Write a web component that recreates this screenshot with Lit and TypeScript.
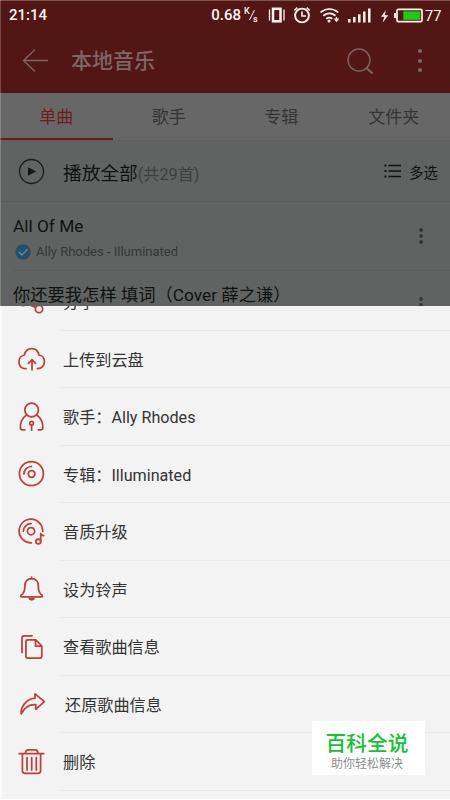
import { LitElement, html, css, svg } from "lit";
import { customElement } from "lit/decorators.js";

const dots = (cls: string) => html`<div class="dots ${cls}"><i></i><i></i><i></i></div>`;

const icons = {
  share: svg`<circle cx="8" cy="16" r="3.6"/><circle cx="24" cy="8" r="3.6"/><circle cx="24" cy="23" r="3.7"/><path d="M11.2 14.3L20.7 9.6M11.2 17.6L20.7 21.4"/>`,
  cloud: svg`<path d="M11 25.6C6.5 26 3.9 22.6 3.9 19c0-3.6 2.3-6.5 5.5-7C10.200 8 13 5.600 16.700 5.600s6.500 2.400 7.200 6.400c3.300.3 5.500 3.200 5.500 6.700 0 4-2.700 7-7 6.900M17 26.800V17M13.400 20.300L17 16.700l3.600 3.600"/>`,
  person: svg`<circle cx="16.600" cy="9" r="6.800"/><path d="M11.600 14C6.500 17 5 23 5.400 27c.1 1.300.8 1.900 2.100 1.900h2.300M21.600 14c5.100 3 6.600 9 6.200 13-.1 1.300-.8 1.900-2.100 1.900h-2.300M16.600 24v5.200"/><circle cx="16.600" cy="22.200" r="1.800"/>`,
  disc: svg`<circle cx="16.400" cy="15.700" r="12"/><circle cx="16.600" cy="16" r="3.300"/><path d="M8.900 16a7.600 7.600 0 0 1 7.500-7.500"/>`,
  quality: svg`<path d="M16.500 26.800A11.800 11.800 0 1 1 27.700 15.400"/><circle cx="16" cy="15.200" r="3.600"/><path d="M8.400 15.200A7.600 7.600 0 0 1 16 7.700"/><circle cx="23.300" cy="25.500" r="2.400"/><path d="M25.700 25.500V17.500c.3 1.500 1.300 2 3 2.200"/>`,
  bell: svg`<path d="M16.600 4v1.800M16.600 5.500c-4.200 0-6.700 3.200-6.700 7.200 0 5.500-.7 7.700-3.500 9.200-.9.500-.8 1.900.4 1.900h19.600c1.200 0 1.300-1.400.4-1.900-2.800-1.500-3.500-3.700-3.500-9.200 0-4-2.500-7.200-6.700-7.200z"/><path d="M14.300 25.700h4.800c-.3 1.500-4.500 1.500-4.800 0z"/>`,
  files: svg`<path d="M7 21.500V7.200C7 5.600 7.800 4.800 9.400 4.800H17"/><path d="M12.800 8.800h8l6 6.200v10c0 1.400-.7 2.200-2.100 2.200H13c-1.400 0-2.100-.8-2.100-2.200V11c0-1.400.6-2.200 1.900-2.200zM20.500 9v6.200h6.200"/>`,
  forward: svg`<path d="M20 5.900l9.400 7.800-8.700 7.600v-4.700c-7-.6-11.500 3.400-14.500 9.200-.6-7.500 5.300-14.600 13.800-15.600z"/>`,
  trash: svg`<path d="M4.200 7.700h24.500M10.300 7.500c.2-2.600 1-3.600 3-3.600h6.700c2 0 2.800 1 3 3.600M7.400 8v16.800c0 1.700.9 2.600 2.600 2.600h13c1.700 0 2.600-.9 2.600-2.600V8M12 11.500V24M16.700 11.500V24M21.300 11.500V24"/>`,
};

const menu: { icon: keyof typeof icons; label: string; shifted?: boolean }[] = [
  { icon: "share", label: "分享" },
  { icon: "cloud", label: "上传到云盘" },
  { icon: "person", label: "歌手：Ally Rhodes" },
  { icon: "disc", label: "专辑：Illuminated" },
  { icon: "quality", label: "音质升级" },
  { icon: "bell", label: "设为铃声" },
  { icon: "files", label: "查看歌曲信息" },
  { icon: "forward", label: "还原歌曲信息", shifted: true },
  { icon: "trash", label: "删除" },
];

@customElement("app-root")
export class AppRoot extends LitElement {
  static styles = css`
    :host {
      display: block;
      position: relative;
      width: 450px;
      height: 800px;
      overflow: hidden;
      background: #616362;
      font-family: Roboto, "Noto Sans CJK SC", sans-serif;
      color: #101211;
    }
    * { box-sizing: border-box; }
    svg { display: block; flex: none; fill: none; }
    .top { height: 93px; background: #521714; border-top: 1px solid #805350; }
    .status {
      height: 27px;
      display: flex;
      align-items: center;
      padding: 0 1px 0 9px;
      color: #fff3f1;
      font-size: 15px;
      font-weight: 500;
    }
    .status .speed { margin-left: auto; }
    .bar { height: 65px; display: flex; align-items: center; padding: 0 28px 0 22px; }
    .title { margin-left: 22px; font-size: 21px; line-height: 30px; font-weight: 500; color: #7b6765; flex: 1; }
    .dots { display: flex; flex-direction: column; align-items: center; }
    .dots i { width: 4px; height: 4px; border-radius: 50%; background: #363837; }
    .big { gap: 5.500px; margin-left: 44px; }
    .big i { background: #7d6765; }
    .small { gap: 2.300px; width: 4px; margin-right: 27px; }
    .tabs { display: grid; grid-template-columns: repeat(4, 1fr); height: 48px; background: #676767; border-bottom: 1px solid #5f6160; }
    .tab { height: 47px; display: flex; align-items: center; justify-content: center; font-size: 17px; color: #343434; border-bottom: 2px solid transparent; }
    .active { color: #6f1d1b; border-color: #721a1b; }
    .play { height: 61px; display: flex; align-items: center; padding: 0 12px 0 18px; border-bottom: 1px solid #595b5a; }
    .all { margin-left: 18px; font-size: 18.700px; flex: 1; }
    .count { font-size: 16.200px; color: #3d3f3e; }
    .multi { margin-left: 8px; font-size: 14.500px; }
    .song { height: 69px; display: flex; align-items: center; margin-left: 13px; border-bottom: 1px solid #5b5d5c; }
    .info { flex: 1; height: 69px; padding-top: 11px; }
    .name { font-size: 17.300px; line-height: 26px; white-space: nowrap; }
    .sub { display: flex; align-items: center; gap: 5px; margin-top: 4px; padding-left: 2px; font-size: 13px; line-height: 18px; color: #363837; }
    .sheet {
      position: absolute;
      left: 0;
      top: 306px;
      width: 450px;
      height: 493px;
      overflow: hidden;
      background: #f3f3f3;
      border-left: 2px solid #fafafa;
    }
    .items { display: flex; flex-direction: column; margin-top: -33px; }
    .item { flex: none; height: 57.500px; display: flex; align-items: center; padding-left: 13px; }
    .item svg { stroke: #bd403b; stroke-width: 1.750; stroke-linecap: round; stroke-linejoin: round; }
    .label { flex: 1; height: 57.500px; display: flex; align-items: center; margin-left: 13px; padding-left: 3px; border-bottom: 1px solid #e9e9e9; font-size: 16.150px; color: #333; }
    .shifted { padding-left: 5px; }
    .foot { position: absolute; left: 0; bottom: 0; width: 450px; height: 1px; background: #fdfdfd; }
    .edge { position: absolute; left: 0; top: 0; width: 1px; height: 306px; background: rgba(255, 255, 255, 0.22); }
    .mark {
      position: absolute;
      left: 312px;
      top: 721px;
      width: 113px;
      height: 54px;
      padding-right: 3px;
      background: #fff;
      display: flex;
      flex-direction: column;
      align-items: center;
      white-space: nowrap;
    }
    .brand { margin-top: 10px; font-size: 20.700px; line-height: 26px; font-weight: 500; color: #16c136; }
    .slogan { font-size: 12px; line-height: 14px; color: #8d8d8d; }
  `;

  render() {
    return html`
      <div class="top">
        <div class="status">
          <span>21:14</span>
          <span class="speed">0.68</span>
          <svg width="208" height="26" viewBox="0 0 208 26" stroke="#fff3f1">
            <g fill="#fff3f1" stroke="none" font-family="Roboto" font-weight="500" font-size="9">
              <text x="3" y="12">K</text><text x="12" y="19.500">s</text>
            </g>
            <path d="M8.500 18L13.500 8" stroke-width="1"/>
            <rect x="32" y="6.800" width="7.500" height="12.500" stroke-width="2.500"/>
            <path d="M28.500 7.500v11M43 7.500v11" stroke-width="1.300"/>
            <circle cx="61" cy="13.500" r="6.900" stroke-width="1.900"/>
            <path d="M61 9.500V14h4M53.300 8.500l3-2.800M68.700 8.500l-3-2.800" stroke-width="1.600"/>
            <path d="M79.500 10.400c5.500-4.500 12.300-4.500 17.800 0M82.300 13.700c3.700-3 8.500-3 12.200 0M85.300 16.800c2-1.500 4.300-1.500 6 0" stroke-width="1.800"/>
            <circle cx="88" cy="19" r="1.500" fill="#fff3f1" stroke="none"/>
            <path d="M95.500 15v2M94 17.200h3l-1.500 2z" stroke-width="1.300" fill="#fff3f1"/>
            <path d="M108.300 17v3.500M113.300 15v5.500M118.300 12.300v8.200M123.300 9.500v11M128.300 6.500v14" stroke-width="2.500"/>
            <path d="M145 8l-5 6.800h3.300l-1.600 5.700 5.600-7.300h-3.600z" fill="#fff3f1" stroke="none"/>
            <rect x="156" y="7.300" width="25" height="12.400" rx="1.500" stroke-width="1.700"/>
            <path d="M154 11v5" stroke-width="2"/>
            <path d="M162.300 9.300h17v8.500h-17z" fill="#20ca13" stroke="none"/>
            <text x="184" y="19" fill="#fff3f1" stroke="none" font-family="Roboto" font-weight="400" font-size="14.500">77</text>
          </svg>
        </div>
        <div class="bar">
          <svg width="27" height="26" viewBox="0 0 27 26" stroke="#7b6462" stroke-width="1.400"><path d="M26 12.500H1.500M13 1.500L1.500 12.500 13 23.500"/></svg>
          <span class="title">本地音乐</span>
          <svg width="28" height="28" viewBox="0 0 28 28" stroke="#7b6462" stroke-width="1.400"><circle cx="13" cy="13" r="11"/><path d="M20.500 21l6 5.500" stroke-width="2"/></svg>
          ${dots("big")}
        </div>
      </div>
      <div class="tabs">
        <div class="tab active">单曲</div><div class="tab">歌手</div><div class="tab">专辑</div><div class="tab">文件夹</div>
      </div>
      <div class="play">
        <svg width="27" height="27" viewBox="0 0 27 27"><circle cx="13.500" cy="13.500" r="12" stroke="#1b1d1c" stroke-width="1.300"/><path d="M10 9.300v8.400l8-4.200z" fill="#151716"/></svg>
        <span class="all">播放全部<span class="count">(共29首)</span></span>
        <svg width="17" height="14" viewBox="0 0 17 14" stroke="#101211" stroke-width="1.600"><path d="M4.500 1.500H17M4.500 7H17M4.500 12.500H17"/><path d="M.5 1.500h2M.5 7h2M.5 12.500h2" stroke-width="2"/></svg>
        <span class="multi">多选</span>
      </div>
      <div class="song">
        <div class="info">
          <div class="name">All Of Me</div>
          <div class="sub">
            <svg width="16" height="16" viewBox="0 0 16 16"><circle cx="8" cy="8" r="7.700" fill="#23506c"/><path d="M4 8l3 3 5.500-6" stroke="#75828b" stroke-width="1.400"/></svg>
            <span>Ally Rhodes - Illuminated</span>
          </div>
        </div>
        ${dots("small")}
      </div>
      <div class="song">
        <div class="info"><div class="name">你还要我怎样 填词（Cover 薛之谦）</div></div>
        ${dots("small")}
      </div>
      <div class="edge"></div>
      <div class="sheet">
        <div class="items">
          ${menu.map((m) => html`
            <div class="item">
              <svg width="32" height="32" viewBox="0 0 32 32">${icons[m.icon]}</svg>
              <div class="label ${m.shifted ? "shifted" : ""}">${m.label}</div>
            </div>`)}
        </div>
      </div>
      <div class="foot"></div>
      <div class="mark">
        <div class="brand">百科全说</div>
        <div class="slogan">助你轻松解决</div>
      </div>
    `;
  }
}
